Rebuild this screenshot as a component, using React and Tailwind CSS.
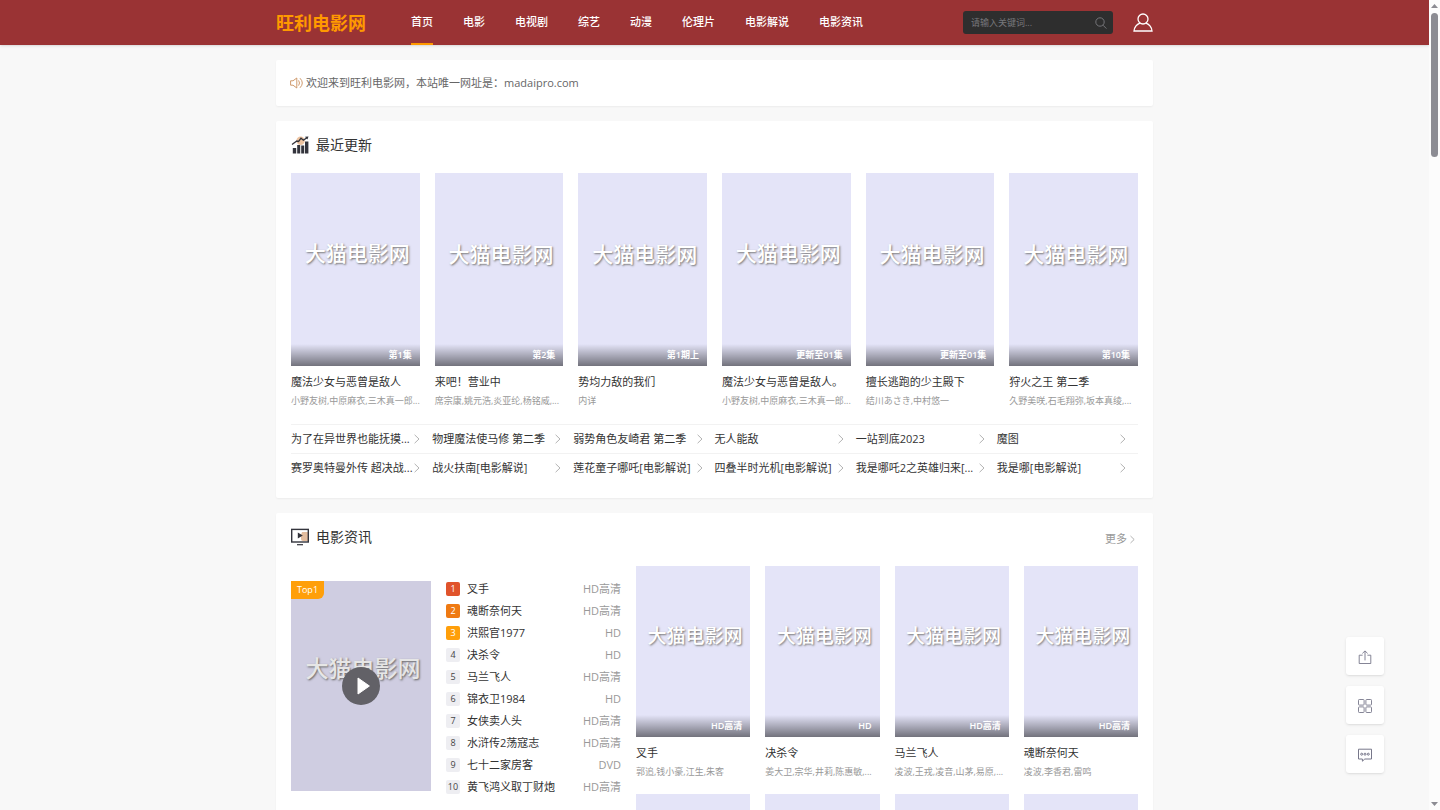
import React, { useState } from 'react';

const navItems = ['首页', '电影', '电视剧', '综艺', '动漫', '伦理片', '电影解说', '电影资讯'];

const latest = [
    { title: '魔法少女与恶曾是敌人', note: '第1集', actors: '小野友树,中原麻衣,三木真一郎...' },
    { title: '来吧！营业中', note: '第2集', actors: '席宗康,姚元浩,炎亚纶,杨铭威,...' },
    { title: '势均力敌的我们', note: '第1期上', actors: '内详' },
    { title: '魔法少女与恶曾是敌人。', note: '更新至01集', actors: '小野友树,中原麻衣,三木真一郎...' },
    { title: '擅长逃跑的少主殿下', note: '更新至01集', actors: '结川あさき,中村悠一' },
    { title: '狩火之王 第二季', note: '第10集', actors: '久野美咲,石毛翔弥,坂本真绫,...' },
];

const textLinks = [
    '为了在异世界也能抚摸...', '物理魔法使马修 第二季', '弱势角色友崎君 第二季', '无人能敌', '一站到底2023', '魔图',
    '赛罗奥特曼外传 超决战...', '战火扶南[电影解说]', '莲花童子哪吒[电影解说]', '四叠半时光机[电影解说]', '我是哪吒2之英雄归来[...', '我是哪[电影解说]',
];

const ranking = [
    { title: '叉手', note: 'HD高清' },
    { title: '魂断奈何天', note: 'HD高清' },
    { title: '洪熙官1977', note: 'HD' },
    { title: '决杀令', note: 'HD' },
    { title: '马兰飞人', note: 'HD高清' },
    { title: '锦衣卫1984', note: 'HD' },
    { title: '女侠卖人头', note: 'HD高清' },
    { title: '水浒传2荡寇志', note: 'HD高清' },
    { title: '七十二家房客', note: 'DVD' },
    { title: '黄飞鸿义取丁财炮', note: 'HD高清' },
];

const rankColors = ['bg-[#e0532b] text-white', 'bg-[#ef7a12] text-white', 'bg-[#ff9f0a] text-white'];

const news = [
    { title: '叉手', note: 'HD高清', actors: '郭追,钱小豪,江生,朱客' },
    { title: '决杀令', note: 'HD', actors: '姜大卫,宗华,井莉,陈惠敏,...' },
    { title: '马兰飞人', note: 'HD高清', actors: '凌波,王戎,凌音,山茅,易原,...' },
    { title: '魂断奈何天', note: 'HD高清', actors: '凌波,李香君,雷鸣' },
];

//ICONS
const Chevron = ({ className }) => (
    <svg className={className} viewBox="0 0 6 10" fill="none" stroke="currentColor" strokeWidth="0.9">
        <path d="M0.6 0.8 L5 5 L0.6 9.2" />
    </svg>
);

const ChartIcon = () => (
    <svg className="h-[18px] w-[18px]" viewBox="0 0 18 18" fill="none">
        <circle cx="9.6" cy="4.8" r="4.2" fill="#edc3a0" />
        <path d="M1.8 12h3.4v5.6h-3.4z M6.2 9h3v8.6h-3z M10.2 9.6h3v8h-3z M14 5.4h3.4v12.2h-3.4z" fill="#33343c" />
        <path d="M1 8.6 L5.8 5 L7.6 5.4 L10 2.2 L12.4 4.2 L16.4 1.4" stroke="#33343c" strokeWidth="1.3" />
        <path d="M14 0.8 L17.5 0.6 L16.4 3.6 Z" fill="#33343c" />
    </svg>
);

const ScreenIcon = () => (
    <svg className="h-[18px] w-[18px]" viewBox="0 0 18 18" fill="none">
        <path d="M11 4h6v9h-5a2 2 0 0 1-2-2v-4z" fill="#e3bd9f" />
        <rect x="0.7" y="1.4" width="16.6" height="12.6" stroke="#33343c" strokeWidth="1.4" />
        <path d="M6.8 4.6 L11.8 7.6 L6.8 10.6 Z" fill="#33343c" />
        <path d="M6 16.7h6" stroke="#33343c" strokeWidth="1.2" />
    </svg>
);

const SpeakerIcon = () => (
    <svg className="h-3 w-[13px] shrink-0 text-[#c98f5c]" viewBox="0 0 13 12" fill="none" stroke="currentColor" strokeWidth="0.9">
        <path d="M0.6 3.8 H3 L6.8 1 V11 L3 8.2 H0.6 Z" />
        <path d="M8.6 3.4 Q10.4 6 8.6 8.6 M10 1.2 Q14.6 6 10 10.8" />
    </svg>
);

const SearchIcon = () => (
    <svg className="h-3 w-3" viewBox="0 0 12 12" fill="none" stroke="currentColor" strokeWidth="0.9">
        <circle cx="5" cy="5" r="4.2" />
        <path d="M8 8.2 L11.4 11.6" />
    </svg>
);

const UserIcon = () => (
    <svg className="h-5 w-5" viewBox="0 0 20 20" fill="none" stroke="currentColor" strokeWidth="1.3">
        <circle cx="10" cy="6" r="5" />
        <path d="M7 10.2 C3.4 11.6 1.4 14.4 1 18 H19 C18.6 14.4 16.6 11.6 13 10.2" />
    </svg>
);

const ShareIcon = () => (
    <svg className="h-[14px] w-[14px]" viewBox="0 0 14 14" fill="none" stroke="currentColor" strokeWidth="0.9">
        <path d="M4.6 5.2 H1.2 V13.5 H12.8 V5.2 H9.4" />
        <path d="M7 10.4 V1 M4.4 3.4 L7 0.9 L9.6 3.4" />
    </svg>
);

const GridIcon = () => (
    <svg className="h-[14px] w-[14px]" viewBox="0 0 14 14" fill="none" stroke="currentColor" strokeWidth="0.9">
        <rect x="0.5" y="0.5" width="5.6" height="5.6" rx="0.8" />
        <rect x="7.9" y="0.5" width="5.6" height="5.6" rx="0.8" />
        <rect x="0.5" y="7.9" width="5.6" height="5.6" rx="0.8" />
        <rect x="7.9" y="7.9" width="5.6" height="5.6" rx="0.8" />
    </svg>
);

const MessageIcon = () => (
    <svg className="h-[14px] w-[14px]" viewBox="0 0 14 14" fill="none" stroke="currentColor" strokeWidth="1">
        <path d="M0.5 1.2 H13.5 V11 H6.8 L4.4 13.2 V11 H0.5 Z" />
        <circle cx="3.7" cy="6.2" r="1" />
        <circle cx="7" cy="6.2" r="1" />
        <circle cx="10.3" cy="6.2" r="1" />
    </svg>
);

const Poster = ({ note, markClass }) => (
    <a href="#" className="relative flex aspect-[2/3] w-full items-center justify-center overflow-hidden bg-[#e4e4f8]">
        {markClass && (
            <span className={`${markClass} mb-8 ml-1 leading-6 whitespace-nowrap text-white [text-shadow:1px_1px_2px_#777]`}>
                大猫电影网
            </span>
        )}
        {note && (
            <span className="absolute inset-x-0 bottom-0 bg-linear-to-b from-transparent to-black/50 px-2 py-1 text-right text-[9px] leading-[14px] font-semibold text-white">
                {note}
            </span>
        )}
    </a>
);

const MovieCard = ({ movie, markClass }) => (
    <li className="min-w-0">
        <Poster note={movie.note} markClass={markClass} />
        <h4 className="mt-2 text-[11px] leading-4 whitespace-nowrap">
            <a href="#">{movie.title}</a>
        </h4>
        <p className="mt-1 text-[9px] leading-[14px] whitespace-nowrap text-[#999]">{movie.actors}</p>
    </li>
);

const Header = () => {
    const [keyword, setKeyword] = useState('');

    return (
        <header className="h-[45px] bg-[#9a3334] shadow-sm">
            <div className="mx-auto flex h-full max-w-[877px] items-center">
                <a href="#" className="text-lg leading-6 font-bold text-[#ff9900]">旺利电影网</a>
                <nav className="ml-[45px] flex h-full gap-[30px]">
                    {navItems.map((item, i) => (
                        <a
                            key={item}
                            href="#"
                            className={`flex items-center border-b-2 pt-0.5 text-[11px] font-medium text-white ${i === 0 ? 'border-[#ff9900]' : 'border-transparent'}`}>
                            {item}
                        </a>
                    ))}
                </nav>
                <form className="ml-auto flex h-[23px] w-[150px] items-center rounded-[3px] bg-[#2e2e2e] px-2 text-[#7c7c80]" onSubmit={(e) => e.preventDefault()}>
                    <input
                        type="text"
                        aria-label="请输入关键词..."
                        placeholder="请输入关键词..."
                        value={keyword}
                        onChange={(e) => setKeyword(e.target.value)}
                        className="min-w-0 flex-1 bg-transparent text-[9px] text-white outline-none placeholder:text-[#77777b]"
                    />
                    <button type="submit" className="mr-[-2px]"><SearchIcon /></button>
                </form>
                <a href="#" className="ml-5 text-white"><UserIcon /></a>
            </div>
        </header>
    );
};

//DECORATIVE SCROLL TRACK
const ScrollTrack = () => (
    <div className="flex w-[11px] shrink-0 flex-col items-center bg-[#fcfcfc] py-1 text-[#8c8c93]">
        <svg className="h-1 w-[7px]" viewBox="0 0 7 4"><path d="M0 4 L3.5 0 L7 4 Z" fill="currentColor" /></svg>
        <div className="mt-[5px] h-36 w-[7px] rounded-full bg-[#8c8c93]" />
        <svg className="mt-auto h-1 w-[7px]" viewBox="0 0 7 4"><path d="M0 0 L3.5 4 L7 0 Z" fill="currentColor" /></svg>
    </div>
);

const App = () => {
    return (
        <div className="flex h-screen bg-[#f8f8f8] font-['Open_Sans','Noto_Sans_CJK_SC',sans-serif] text-[#333]">
            <div className="min-w-0 flex-1 overflow-hidden">
                <Header />

                <main className="mx-auto mt-[15px] flex max-w-[877px] flex-col gap-[15px]">
                    {/*NOTICE*/}
                    <section className="flex h-[46px] items-center gap-[3px] rounded-xs bg-white px-[14px] text-[11px] text-[#666] shadow-xs">
                        <SpeakerIcon />
                        <p>欢迎来到旺利电影网，本站唯一网址是：madaipro.com</p>
                    </section>

                    {/*LATEST UPDATES*/}
                    <section className="rounded-xs bg-white px-[15px] pt-[14px] pb-4 shadow-xs">
                        <div className="flex h-5 items-center gap-[7px]">
                            <ChartIcon />
                            <h3 className="text-[14px] leading-5">最近更新</h3>
                        </div>
                        <ul className="mt-[18px] grid grid-cols-6 gap-[15px]">
                            {latest.map((movie) => <MovieCard key={movie.title} movie={movie} markClass="text-[21px] font-medium" />)}
                        </ul>
                        <ul className="mt-4 grid grid-cols-6">
                            {textLinks.map((text) => (
                                <li key={text} className="min-w-0 border-t border-[#f2f2f2]">
                                    <a href="#" className="flex h-7 items-center justify-between pr-3 text-[11px] whitespace-nowrap">
                                        {text}
                                        <Chevron className="h-[10px] w-[6px] shrink-0 text-[#aaa]" />
                                    </a>
                                </li>
                            ))}
                        </ul>
                    </section>

                    {/*MOVIE NEWS*/}
                    <section className="rounded-xs bg-white px-[15px] pt-[14px] pb-4 shadow-xs">
                        <div className="flex h-5 items-center gap-[7px]">
                            <ScreenIcon />
                            <h3 className="text-[14px] leading-5">电影资讯</h3>
                            <a href="#" className="mt-1 mr-[3px] ml-auto flex items-center gap-[3px] text-[11px] leading-4 text-[#999]">
                                更多
                                <Chevron className="h-[9px] w-[5px]" />
                            </a>
                        </div>
                        <div className="mt-[19px] flex gap-[15px]">
                            <div className="mt-[15px] flex w-[330px] shrink-0 items-start gap-[15px]">
                                <a href="#" className="relative flex h-[210px] w-[140px] shrink-0 items-center justify-center bg-[#cfcde1]">
                                    <span className="mb-9 ml-1 text-[23px] leading-7 font-medium whitespace-nowrap text-[#e6e6e6] [text-shadow:1px_1px_2px_#666]">大猫电影网</span>
                                    <span className="absolute top-0 left-0 rounded-br-md bg-[#ff9f0a] px-[6px] text-[9px] leading-[18px] text-white">Top1</span>
                                    <span className="absolute inset-0 m-auto flex h-[38px] w-[38px] items-center justify-center rounded-full bg-[#626167]">
                                        <svg className="ml-1 h-[18px] w-[13px]" viewBox="0 0 13 18"><path d="M1 1 L12.4 9 L1 17 Z" fill="#fff" stroke="#fff" strokeLinejoin="round" /></svg>
                                    </span>
                                </a>
                                <ol className="min-w-0 flex-1">
                                    {ranking.map((movie, i) => (
                                        <li key={movie.title} className="mb-[6px] flex h-4 items-center text-[11px] whitespace-nowrap">
                                            <span className={`mr-[7px] h-[14px] w-[14px] rounded-[2px] text-center text-[9px] leading-[14px] ${rankColors[i] || 'bg-[#eeeef2] text-[#444]'}`}>
                                                {i + 1}
                                            </span>
                                            <a href="#">{movie.title}</a>
                                            <span className="ml-auto text-[#999]">{movie.note}</span>
                                        </li>
                                    ))}
                                </ol>
                            </div>
                            <ul className="grid min-w-0 flex-1 grid-cols-4 gap-[15px]">
                                {news.map((movie) => <MovieCard key={movie.title} movie={movie} markClass="text-[19px] font-medium" />)}
                                {news.map((movie) => <li key={movie.title}><Poster /></li>)}
                            </ul>
                        </div>
                    </section>
                </main>
            </div>

            <ScrollTrack />

            {/*SIDE BUTTONS*/}
            <div className="fixed right-14 bottom-[37px] flex flex-col gap-[11px] text-[#77778a]">
                {[ShareIcon, GridIcon, MessageIcon].map((Icon, i) => (
                    <button key={i} className="flex h-[38px] w-[38px] items-center justify-center rounded-[3px] bg-white pt-0.5 shadow-sm">
                        <Icon />
                    </button>
                ))}
            </div>
        </div>
    );
};

export default App;
